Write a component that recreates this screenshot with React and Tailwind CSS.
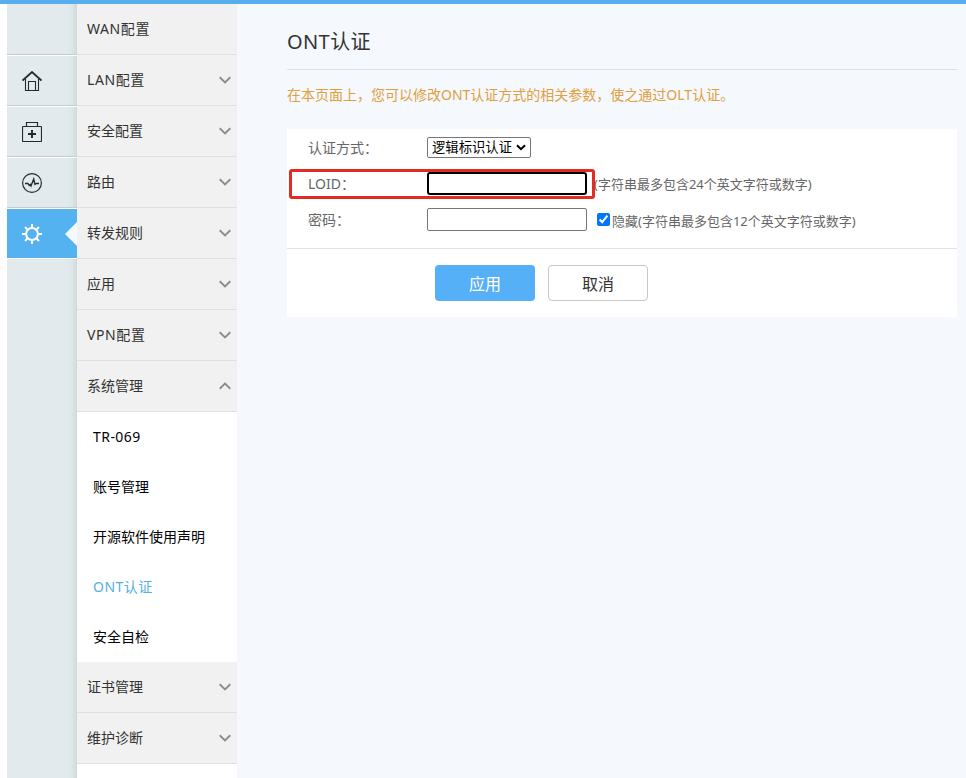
import { useState } from 'react';

const subItems = ['TR-069', '账号管理', '开源软件使用声明', 'ONT认证', '安全自检'];

const menu = [
  { label: 'WAN配置', arrow: false },
  { label: 'LAN配置', arrow: true },
  { label: '安全配置', arrow: true },
  { label: '路由', arrow: true },
  { label: '转发规则', arrow: true },
  { label: '应用', arrow: true },
  { label: 'VPN配置', arrow: true },
  { label: '系统管理', arrow: true, children: subItems },
  { label: '证书管理', arrow: true },
  { label: '维护诊断', arrow: true },
];

// Latin labels get a little extra tracking
const isLatin = (text) => /^[A-Z]/.test(text);

function Arrow({ up }) {
  return (
    <svg width="12" height="8" viewBox="0 0 12 8" fill="none" stroke="#8c8c8c" strokeWidth="1.9" className="-mt-px">
      <path d={up ? 'M0.7 6.7L6 1.5L11.3 6.7' : 'M0.7 1.3L6 6.5L11.3 1.3'} />
    </svg>
  );
}

function HomeIcon() {
  return (
    <svg width="20" height="20" viewBox="0 0 20 20" fill="none" stroke="#222b30">
      <path d="M0.5 9.5L10 1L19.5 9.5" strokeWidth="1.8" />
      <path d="M3.5 8V19.5H16.5V8" strokeWidth="1.1" />
      <path d="M6.5 19.5V10.5H13.5V19.5" strokeWidth="1.1" />
    </svg>
  );
}

function KitIcon() {
  return (
    <svg width="20" height="20" viewBox="0 0 20 20" fill="none" stroke="#222b30">
      <rect x="0.5" y="4.5" width="19" height="15" rx="0.5" strokeWidth="1.2" />
      <path d="M4.5 4.5V0.5H15.5V4.5" strokeWidth="1.2" />
      <path d="M10 8V16M6 12H14" strokeWidth="2" />
    </svg>
  );
}

function PulseIcon() {
  return (
    <svg width="20" height="20" viewBox="0 0 20 20" fill="none" stroke="#222b30">
      <circle cx="10" cy="10" r="9.4" strokeWidth="1.2" />
      <path d="M3 10.5H6L7.2 12.5L8.3 11.5L9 13L11.7 6L13 11.3L14.3 10.5H17" strokeWidth="1.4" />
    </svg>
  );
}

function GearIcon() {
  return (
    <svg width="20" height="20" viewBox="0 0 20 20" fill="none" stroke="#ffffff" strokeWidth="2">
      <circle cx="10" cy="10" r="5.9" />
      <path d="M10 0V3.5M10 16.5V20M0 10H3.5M16.5 10H20M3 3L5.6 5.6M14.4 14.4L17 17M17 3L14.4 5.6M5.6 14.4L3 17" />
    </svg>
  );
}

const rail = [
  { id: 'blank', icon: null },
  { id: 'home', icon: <HomeIcon /> },
  { id: 'kit', icon: <KitIcon /> },
  { id: 'pulse', icon: <PulseIcon /> },
  { id: 'gear', icon: <GearIcon />, active: true },
];

export default function App() {
  const [current, setCurrent] = useState('ONT认证');
  const [hidden, setHidden] = useState(true);

  return (
    <div className="h-screen overflow-hidden flex flex-col bg-white text-sm font-['Noto_Sans','Noto_Sans_CJK_SC',sans-serif]">
      <div className="h-1 shrink-0 bg-[#56aeee]" />
      <div className="flex flex-1 min-h-0 pl-[7px]">
        {/* Icon rail */}
        <nav className="w-[70px] shrink-0 bg-[linear-gradient(to_right,#e2eaed_60px,#dde6e9_65px,#cfd8db_70px)]">
          {rail.map((item) => (
            <div
              key={item.id}
              className={
                item.active
                  ? 'relative h-[51px] flex items-center pl-[15px] bg-[#55b2f1] border-t border-b border-white'
                  : 'h-[51px] flex items-center pl-[15px] pt-px border-b border-[#c3cdd1] shadow-[0_1px_0_#ffffff]'
              }
            >
              {item.icon}
              {item.active && (
                <span className="absolute right-0 top-[13px] border-y-[12px] border-r-[12px] border-y-transparent border-r-[#f4f9fd]" />
              )}
            </div>
          ))}
        </nav>

        {/* Menu */}
        <aside className="w-40 shrink-0 bg-white text-[#333333]">
          {menu.map((item) => (
            <div key={item.label}>
              <div className="h-[51px] flex items-center justify-between pl-2.5 pr-1.5 bg-[#f1f1f1] border-b border-[#e0e0e0]">
                <span className={isLatin(item.label) ? 'tracking-[0.6px]' : ''}>{item.label}</span>
                {item.arrow && <Arrow up={Boolean(item.children)} />}
              </div>
              {item.children && (
                <ul>
                  {item.children.map((name) => (
                    <li
                      key={name}
                      onClick={() => setCurrent(name)}
                      className={`h-[50px] flex items-center pl-4 cursor-pointer ${
                        isLatin(name) ? 'tracking-[0.45px]' : ''
                      } ${current === name ? 'text-[#56aeea]' : 'text-black'}`}
                    >
                      {name}
                    </li>
                  ))}
                </ul>
              )}
            </div>
          ))}
        </aside>

        {/* Content */}
        <main className="flex-1 min-w-0 bg-[#f5f8fd] pl-[50px] pr-[9px] text-[#666666]">
          <h1 className="h-[66px] pt-[23px] text-xl leading-[30px] tracking-[0.4px] text-[#333333] border-b border-[#dde1e7]">
            ONT认证
          </h1>
          <p className="pt-[15px] leading-5 text-[#e0a03c]">
            在本页面上，您可以修改ONT认证方式的相关参数，使之通过OLT认证。
          </p>

          <section className="mt-6 h-[188px] bg-white">
            <div className="h-[120px] border-b border-[#dfe2e6]">
              <div className="h-[37px] flex items-center pl-[21px]">
                <span className="w-[119px]">认证方式：</span>
                <button className="w-[104px] h-[21px] flex items-center justify-between pl-1 pr-1 border border-[#767676] rounded-xs bg-white text-black text-[13.33px] leading-none whitespace-nowrap">
                  逻辑标识认证
                  <svg width="10" height="7" viewBox="0 0 10 7" fill="none" stroke="#000000" strokeWidth="2">
                    <path d="M1 1.2L5 5.2L9 1.2" />
                  </svg>
                </button>
              </div>
              <div className="relative h-9 flex items-center pl-[21px]">
                <span className="w-[119px]">LOID：</span>
                <input
                  type="text"
                  className="w-40 h-[23px] -mt-0.5 border-2 border-black rounded-[3px] bg-white outline-none"
                />
                <span className="ml-[7px] text-[13px]">(字符串最多包含24个英文字符或数字)</span>
                <div className="absolute left-[2px] top-[3px] w-[306px] h-[30px] border-3 border-[#e32a23] rounded-[3px] pointer-events-none" />
              </div>
              <div className="h-9 flex items-center pl-[21px]">
                <span className="w-[119px]">密码：</span>
                <input
                  type="password"
                  className="w-40 h-[23px] -mt-0.5 border border-[#767676] rounded-xs bg-white outline-none"
                />
                <input
                  type="checkbox"
                  checked={hidden}
                  onChange={() => setHidden(!hidden)}
                  className="w-[13px] h-[13px] -mt-0.5 ml-2.5 mr-[2px]"
                />
                <span className="text-[13px] pt-0.5">隐藏(字符串最多包含12个英文字符或数字)</span>
              </div>
            </div>
            <div className="flex gap-[13px] pt-4 pl-[148px] text-base">
              <button className="w-[100px] h-9 pt-0.5 rounded bg-[#56b0f8] text-white">应用</button>
              <button className="w-[100px] h-9 pt-0.5 rounded border border-[#c9c9c9] bg-white text-[#333333]">取消</button>
            </div>
          </section>
        </main>
      </div>
    </div>
  );
}
